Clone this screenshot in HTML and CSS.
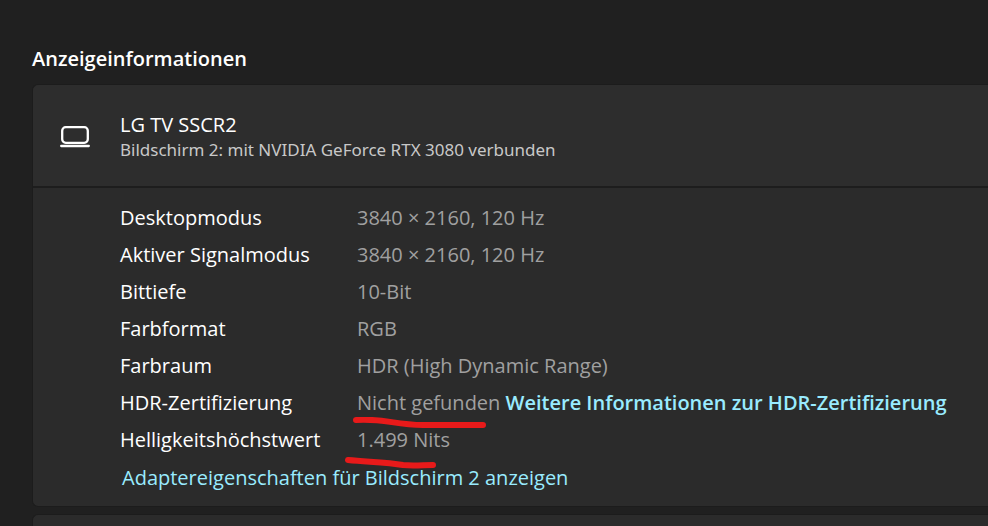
FILE: index.html
```html
<!DOCTYPE html>
<html lang="de">
<head>
  <meta charset="UTF-8" />
  <meta name="viewport" content="width=device-width, initial-scale=1.0"/>
  <title>Anzeigeinformationen</title>
  <link rel="stylesheet" href="styles.css">
</head>
<body>
  <main class="settings">
    <h1 class="settings-title">Anzeigeinformationen</h1>

    <section class="card">
      <header class="card-header">
        <svg class="display-icon" viewBox="0 0 30 24" aria-hidden="true">
          <rect x="2.2" y="2.2" width="25.6" height="15.6" rx="3.5" />
          <path d="M1.2 21H28.8" />
        </svg>
        <div class="display">
          <h2 class="display-name">LG TV SSCR2</h2>
          <p class="display-info">Bildschirm 2: mit NVIDIA GeForce RTX 3080 verbunden</p>
        </div>
      </header>

      <div class="card-body">
        <table class="details">
          <tr>
            <th scope="row">Desktopmodus</th>
            <td>3840 × 2160, 120 Hz</td>
          </tr>
          <tr>
            <th scope="row">Aktiver Signalmodus</th>
            <td>3840 × 2160, 120 Hz</td>
          </tr>
          <tr>
            <th scope="row">Bittiefe</th>
            <td>10-Bit</td>
          </tr>
          <tr>
            <th scope="row">Farbformat</th>
            <td>RGB</td>
          </tr>
          <tr>
            <th scope="row">Farbraum</th>
            <td>HDR (High Dynamic Range)</td>
          </tr>
          <tr>
            <th scope="row">HDR-Zertifizierung</th>
            <td>
              <span class="marked">Nicht gefunden
                <svg class="marker marker-hdr" viewBox="0 0 134 12" aria-hidden="true">
                  <path d="M3 3C30 1 42 8 70 8H130" />
                </svg>
              </span>
              <a class="link link-strong" href="#">Weitere Informationen zur HDR-Zertifizierung</a>
            </td>
          </tr>
          <tr>
            <th scope="row">Helligkeitshöchstwert</th>
            <td>
              <span class="marked">1.499 Nits
                <svg class="marker marker-nits" viewBox="0 0 92 12" aria-hidden="true">
                  <path d="M3 3C24 5 42 5 58 8C68 9 78 8 88 8" />
                </svg>
              </span>
            </td>
          </tr>
        </table>
        <a class="link adapter-link" href="#">Adaptereigenschaften für Bildschirm 2 anzeigen</a>
      </div>
    </section>

    <section class="card card-next"></section>
  </main>
</body>
</html>
```
FILE: styles.css
```css
* {
  box-sizing: border-box;
}

body {
  margin: 0;
  background-color: #202020;
  color: #fff;
  font-family: 'Segoe UI', 'Open Sans', sans-serif;
  font-size: 20px;
}

.settings {
  display: flex;
  flex-direction: column;
  min-height: 100vh;
  padding: 44px 0 0 32px;
}

.settings-title {
  margin: 0 0 10px;
  font-size: 20px;
  line-height: 30px;
  font-weight: 600;
}

.card {
  border: 1px solid #1c1c1c;
  border-right: none;
  border-radius: 6px 0 0 6px;
  background-color: #2b2b2b;
}

.card-header {
  display: flex;
  align-items: center;
  gap: 30px;
  padding: 26px 27px 24px;
  border-bottom: 2px solid #1d1d1d;
  border-radius: 6px 0 0 0;
  background-color: #2d2d2d;
}

.display-icon {
  width: 30px;
  height: 24px;
  fill: none;
  stroke: #fff;
  stroke-width: 2.3;
  stroke-linecap: round;
}

.display-name {
  margin: 0;
  font-size: 20px;
  line-height: 27px;
  font-weight: 400;
}

.display-info {
  margin: 0;
  color: #c8c8c8;
  font-family: 'Segoe UI', 'Noto Sans', sans-serif;
  font-size: 17px;
  line-height: 24px;
}

.card-body {
  padding: 11px 0 8px 87px;
}

.details {
  border-collapse: collapse;
  line-height: 37px;
  white-space: nowrap;
}

.details th {
  width: 237px;
  padding: 0;
  font-weight: 400;
  text-align: left;
}

.details td {
  padding: 0;
  color: #a0a0a0;
}

.link {
  color: #99ebff;
  text-decoration: none;
}

.link:hover {
  text-decoration: underline;
}

.link-strong {
  font-weight: 600;
}

.adapter-link {
  display: block;
  padding-left: 2px;
  line-height: 40px;
}

/* Red pen strokes under the values */
.marked {
  position: relative;
}

.marker {
  position: absolute;
  height: 12px;
  fill: none;
  stroke: #e81a1a;
  stroke-width: 6;
  stroke-linecap: round;
}

.marker-hdr {
  top: 28px;
  left: -4px;
  width: 134px;
}

.marker-nits {
  top: 31px;
  left: -12px;
  width: 92px;
}

.card-next {
  flex: 1;
  margin-top: 7px;
  border-bottom: none;
  border-radius: 6px 0 0 0;
}
```
